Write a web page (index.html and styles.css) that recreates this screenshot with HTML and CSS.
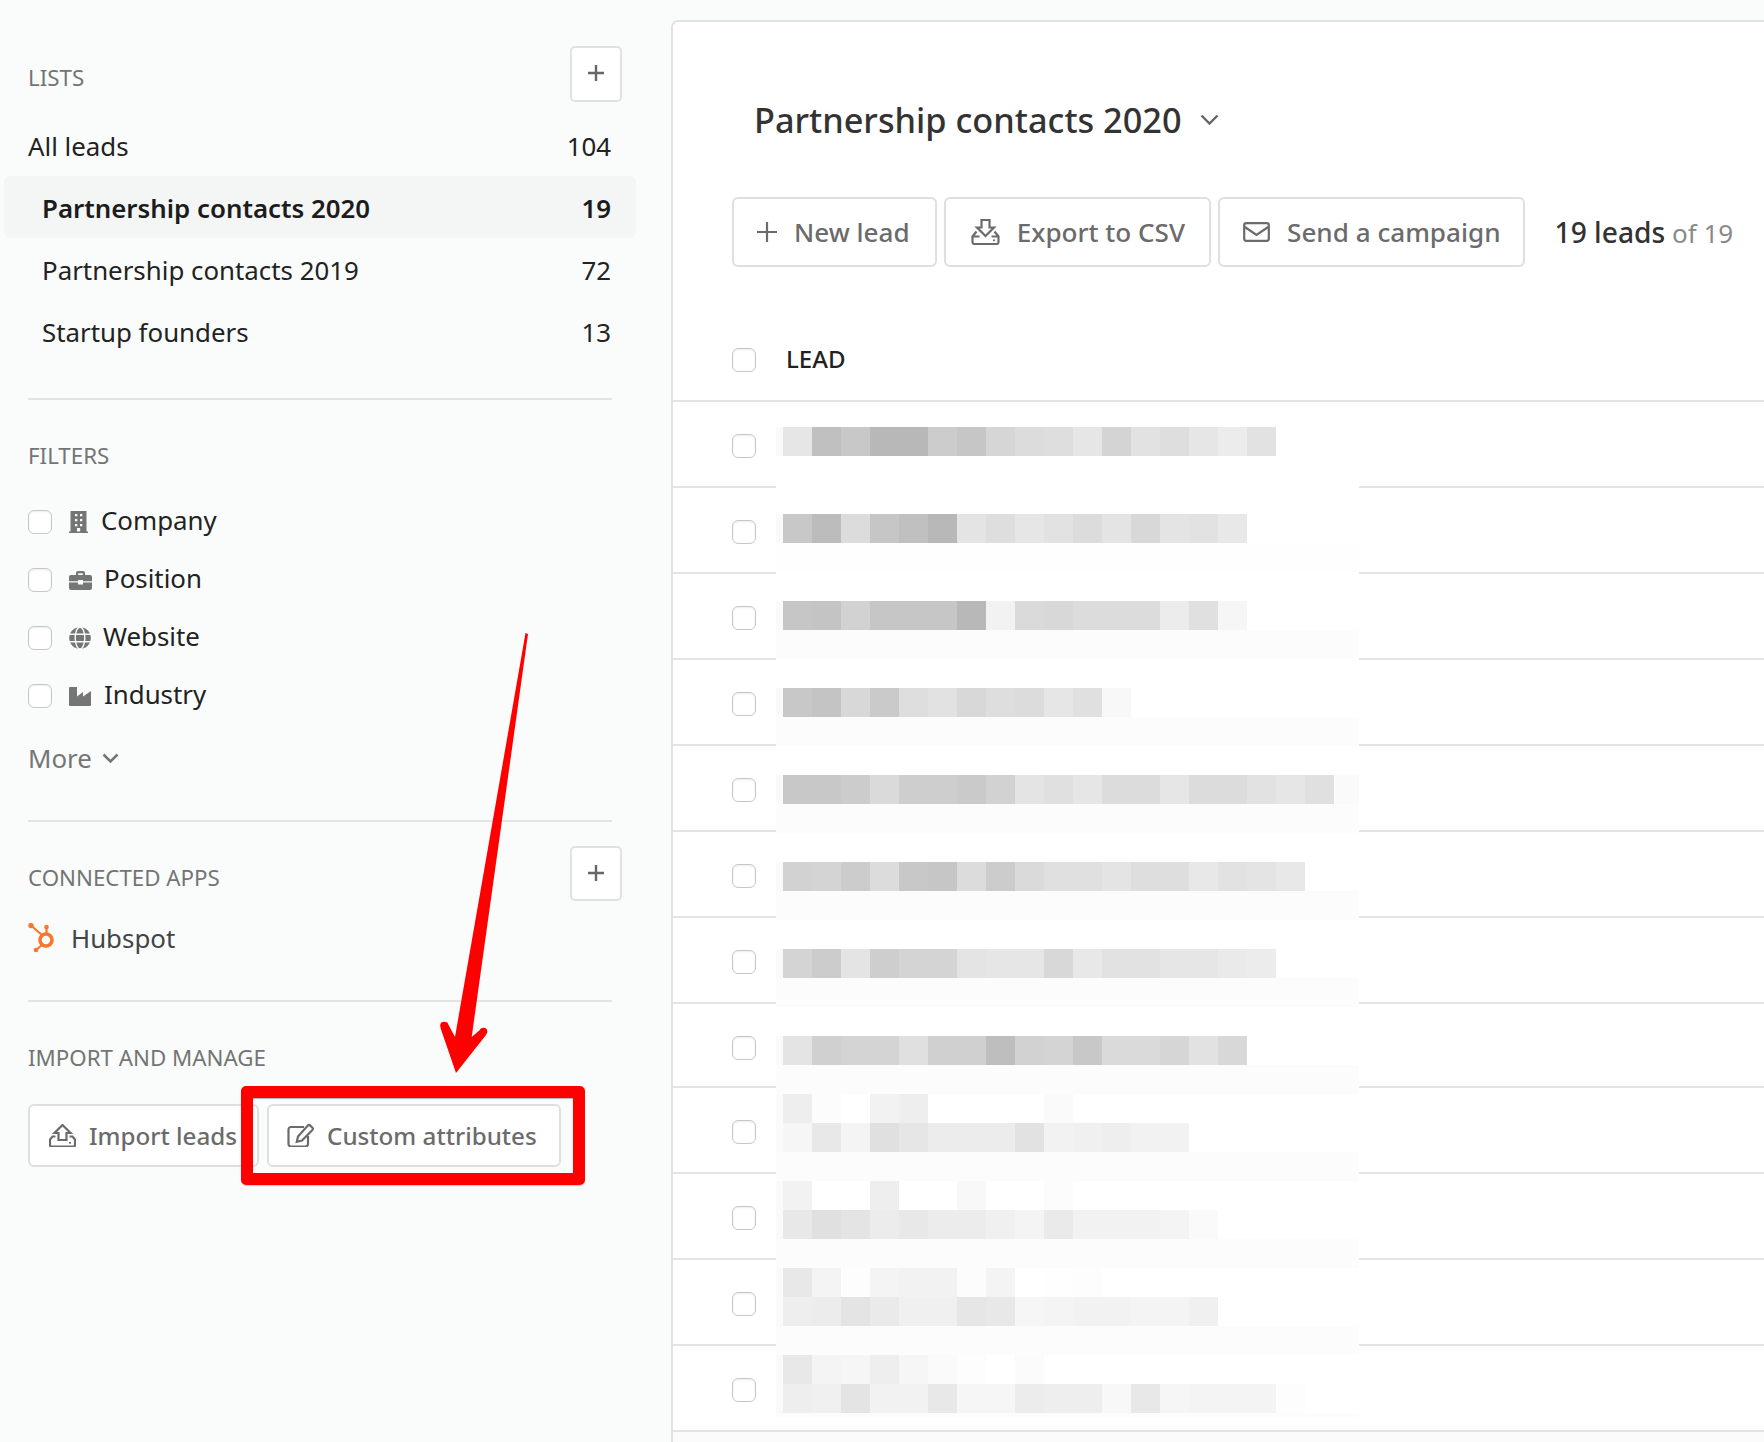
FILE: index.html
```html
<!DOCTYPE html>
<html lang="en">
<head>
<meta charset="utf-8">
<title>Leads</title>
<link rel="stylesheet" href="styles.css">
</head>
<body>
<aside class="sidebar">
  <section class="sect sect-lists">
    <div class="sect-head">
      <h2 class="label label-offset">LISTS</h2>
      <button class="add-btn"><svg class="ic-add" viewBox="0 0 16 16"><path d="M8 0v16M0 8h16"/></svg></button>
    </div>
    <ul class="lists">
      <li class="list-row list-all"><span>All leads</span><span>104</span></li>
      <li class="list-row list-active"><span>Partnership contacts 2020</span><span>19</span></li>
      <li class="list-row"><span>Partnership contacts 2019</span><span>72</span></li>
      <li class="list-row"><span>Startup founders</span><span>13</span></li>
    </ul>
  </section>

  <section class="sect sect-filters">
    <h2 class="label">FILTERS</h2>
    <ul class="filters">
      <li class="filter">
        <input class="check" type="checkbox">
        <svg class="ic-building" viewBox="0 0 19 22"><path fill-rule="evenodd" d="M1.5 0H17.500V20.500H19V22H0V20.500H1.500ZM6 3V5.200H8.300V3ZM11 3V5.200H13.300V3ZM6 8V10.200H8.300V8ZM11 8V10.200H13.300V8ZM6 13V15.200H8.300V13ZM11 13V15.200H13.300V13ZM8 17V20.500H11.200V17Z"/></svg>
        <span class="f-company">Company</span>
      </li>
      <li class="filter">
        <input class="check" type="checkbox">
        <svg class="ic-brief" viewBox="0 0 23 19"><path d="M7 4V2a2 2 0 0 1 2-2h5a2 2 0 0 1 2 2v2h-2.200V2.200H9.200V4z"/><path d="M2 4h19a2 2 0 0 1 2 2v4.200H14V9H9v1.200H0V6a2 2 0 0 1 2-2z"/><path d="M0 11.500h9V13.500h5V11.500h9V17a2 2 0 0 1-2 2H2a2 2 0 0 1-2-2z"/></svg>
        <span class="f-position">Position</span>
      </li>
      <li class="filter">
        <input class="check" type="checkbox">
        <svg class="ic-globe" viewBox="0 0 22 22"><circle class="globe-disc" cx="11" cy="11" r="10.800"/><path class="globe-lines" d="M0 7.300h22M0 14.700h22"/><ellipse class="globe-lines" cx="11" cy="11" rx="4.800" ry="11"/></svg>
        <span class="f-website">Website</span>
      </li>
      <li class="filter">
        <input class="check" type="checkbox">
        <svg class="ic-industry" viewBox="0 0 22 19"><path d="M0 1a1 1 0 0 1 1-1h7v9.500l6-4.500v4.500l8-5.500V18a1 1 0 0 1-1 1H1a1 1 0 0 1-1-1z"/></svg>
        <span class="f-industry">Industry</span>
      </li>
    </ul>
    <div class="more">More <svg class="ic-chev" viewBox="0 0 17 11"><path d="M1.500 1.500 8.500 8.500l7-7"/></svg></div>
  </section>

  <section class="sect sect-apps">
    <div class="sect-head sect-head-apps">
      <h2 class="label label-offset">CONNECTED APPS</h2>
      <button class="add-btn"><svg class="ic-add" viewBox="0 0 16 16"><path d="M8 0v16M0 8h16"/></svg></button>
    </div>
    <div class="app">
      <svg class="ic-hubspot" viewBox="0 0 26 30">
        <circle class="hs-ring" cx="18" cy="17" r="6"/>
        <path class="hs-line" d="M3 2.500 14 12M18.500 4.500V11M14 22 8 27"/>
        <circle class="hs-dot" cx="3" cy="2.600" r="2.700"/>
        <circle class="hs-dot" cx="18.500" cy="4" r="2.300"/>
        <circle class="hs-dot" cx="8" cy="27" r="2.300"/>
      </svg>
      <span>Hubspot</span>
    </div>
  </section>

  <section class="sect sect-import">
    <h2 class="label">IMPORT AND MANAGE</h2>
    <div class="import-btns">
      <button class="btn btn-side btn-import">
        <svg class="ic-import" viewBox="0 0 27 23"><path d="M13.500 1 21.500 9h-4v7h-8V9h-4z"/><path d="M6.500 12.500H3.500L1 15.500v5.500a1.500 1.500 0 0 0 1.500 1.500h22a1.500 1.500 0 0 0 1.500-1.500v-5.500l-2.500-3h-3"/><circle class="ic-dot" cx="21" cy="18.800" r="1.100"/></svg>
        Import leads
      </button>
      <button class="btn btn-side btn-custom">
        <svg class="ic-edit" viewBox="0 0 27 24"><path d="M17 4H4a2.500 2.500 0 0 0-2.500 2.500v14.500A2.500 2.500 0 0 0 4 23.500h14.500a2.500 2.500 0 0 0 2.500-2.500V13"/><path d="M11 13.500 9.800 18.700 15 17.500 25.200 7.300a2 2 0 0 0 0-2.800L23.400 2.700a2 2 0 0 0-2.800 0z"/></svg>
        Custom attributes
      </button>
    </div>
  </section>
</aside>

<main class="main">
  <h1 class="title">Partnership contacts 2020 <svg class="ic-title-chev" viewBox="0 0 19 12"><path d="M1.500 1.500 9.500 9.500l8-8"/></svg></h1>
  <div class="toolbar">
    <button class="btn btn-new"><svg class="ic-plus" viewBox="0 0 20 20"><path d="M10 0v20M0 10h20"/></svg>New lead</button>
    <button class="btn btn-export">
      <svg class="ic-export" viewBox="0 0 29 26"><path d="M10.500 1h8v7.500h4.500L14.500 17 6 8.500h4.500z"/><path d="M5.500 12.500 1.500 17.500v5.500a2 2 0 0 0 2 2h22a2 2 0 0 0 2-2v-5.500l-4-5"/><path d="M1.500 17.500H8.500M20.500 17.500h7"/><circle class="ic-dot" cx="23" cy="21.300" r="1.100"/></svg>
      Export to CSV
    </button>
    <button class="btn btn-send">
      <svg class="ic-mail" viewBox="0 0 27 20"><rect x="1.200" y="1.200" width="24.600" height="17.600" rx="2"/><path d="M1.800 5 13.500 13 25.200 5"/></svg>
      Send a campaign
    </button>
    <div class="count"><strong>19 leads</strong> <span>of 19</span></div>
  </div>
  <div class="thead">
    <input class="check" type="checkbox">
    <span class="th-lead">LEAD</span>
  </div>
  <div class="rows">
    <div class="row"><input class="check" type="checkbox"></div>
    <div class="row"><input class="check" type="checkbox"></div>
    <div class="row"><input class="check" type="checkbox"></div>
    <div class="row"><input class="check" type="checkbox"></div>
    <div class="row"><input class="check" type="checkbox"></div>
    <div class="row"><input class="check" type="checkbox"></div>
    <div class="row"><input class="check" type="checkbox"></div>
    <div class="row row-short"><input class="check" type="checkbox"></div>
    <div class="row"><input class="check" type="checkbox"></div>
    <div class="row"><input class="check" type="checkbox"></div>
    <div class="row"><input class="check" type="checkbox"></div>
    <div class="row"><input class="check" type="checkbox"></div>
  </div>
  <div class="tfoot"></div>
  <svg class="mosaic" id="mosaic" viewBox="0 0 583 990" shape-rendering="crispEdges"></svg>
</main>

<div class="callout-box"></div>
<svg class="callout-arrow" viewBox="0 0 1764 1442">
  <path d="M525.500 633 528 634 471.700 1037 481 1029 486 1035 456 1073 440.500 1028 447 1022 455 1037z"/>
  <circle cx="483.500" cy="1031.500" r="3.800"/>
  <circle cx="444" cy="1025.500" r="3.800"/>
</svg>
<script src="mosaic.js"></script>
</body>
</html>
```

FILE: styles.css
```css
* { box-sizing: border-box; }
html, body { margin: 0; padding: 0; }
body {
  position: relative;
  display: flex;
  width: 1764px;
  height: 1442px;
  overflow: hidden;
  background: #fafcfb;
  font-family: "Noto Sans", "Open Sans", sans-serif;
  font-size: 25.85px;
  color: #222;
}
ul { list-style: none; margin: 0; padding: 0; }
h1, h2 { margin: 0; font-weight: 400; }
button { font-family: inherit; cursor: pointer; }

.sidebar { flex: 0 0 671px; padding-left: 28px; }
.sect { width: 584px; border-bottom: 2px solid #e3e5e5; }
.sect-import { border-bottom: 0; }
.sect-lists { padding: 46px 0 36px; }
.sect-filters { padding: 42px 0 42px; }
.sect-apps { padding: 24px 0 42px; }
.sect-import { padding-top: 42px; }

.sect-head { position: relative; display: flex; justify-content: space-between; align-items: flex-start; width: 594px; height: 56px; }
.sect-head-apps { height: 55px; }
.label { font-size: 22.3px; line-height: 28px; color: #737574; }
.label-offset { padding-top: 18px; }

.add-btn { display: flex; align-items: center; justify-content: center; width: 52px; height: 100%; padding: 0; background: #fff; border: 2px solid #e0e2e2; border-radius: 5px; }
.ic-add { width: 16px; height: 16px; margin-top: -2px; fill: none; stroke: #666; stroke-width: 2.4; }

.lists { margin: 12px 0 0 -24px; width: 632px; }
.list-row { display: flex; justify-content: space-between; align-items: center; height: 62px; padding: 2px 25px 0 38px; border-radius: 6px; line-height: 60px; }
.list-all { padding-left: 24px; }
.list-active { background: #f4f5f5; font-weight: 600; color: #1c1c1c; }

.check { appearance: none; -webkit-appearance: none; flex: none; display: block; width: 24px; height: 24px; margin: 0; background: #fff; border: 1.5px solid #c6c8c8; border-radius: 6px; box-shadow: inset 0 1px 2px rgba(0, 0, 0, .08); }

.filters { margin-top: 23px; }
.filter { display: flex; align-items: center; height: 58px; }
.filter svg { flex: none; margin-left: 17px; fill: #757575; }
.filter span { margin-top: -4px; }
.ic-building { width: 19px; height: 22px; }
.ic-brief { width: 23px; height: 19px; }
.ic-globe { width: 22px; height: 22px; }
.ic-industry { width: 22px; height: 19px; }
.f-company { margin-left: 13px; }
.f-position { margin-left: 12px; }
.f-website { margin-left: 12px; }
.f-industry { margin-left: 13px; }
.filter svg .globe-lines { fill: none; stroke: #fafcfb; stroke-width: 1.4; }

.more { display: flex; align-items: center; gap: 10px; height: 40px; margin-top: 13px; color: #757575; }
.ic-chev { width: 17px; height: 11px; fill: none; stroke: #757575; stroke-width: 2.5; }

.app { display: flex; align-items: center; gap: 17px; height: 40px; margin-top: 17px; color: #444; }
.ic-hubspot { flex: none; width: 26px; height: 30px; }
.hs-ring { fill: none; stroke: #f8762f; stroke-width: 3.6; }
.hs-line { fill: none; stroke: #f8762f; stroke-width: 2.2; }
.hs-dot { fill: #f8762f; }

.import-btns { display: flex; gap: 8px; margin-top: 32px; }
.btn { display: flex; align-items: center; flex: none; background: #fff; border: 2px solid #dedfdf; border-radius: 6px; color: #6b6b6b; font-size: 26.1px; font-weight: 500; white-space: nowrap; }
.btn svg { flex: none; fill: none; stroke: #6b6b6b; stroke-width: 2.2; }
.btn svg .ic-dot { fill: #6b6b6b; stroke: none; }
.btn-side { height: 63px; padding-bottom: 2px; gap: 13px; font-size: 24.2px; }
.btn-import { padding-left: 19px; padding-right: 20px; }
.btn-custom { padding-left: 18px; padding-right: 22px; }
.ic-import { width: 27px; height: 23px; }
.ic-edit { width: 27px; height: 24px; }

.main { position: relative; flex: 1; margin-top: 20px; padding-left: 59px; background: #fff; border-top: 2px solid #e2e2e2; border-left: 2px solid #e2e2e2; border-top-left-radius: 7px; }
.title { display: flex; align-items: center; gap: 18px; height: 40px; margin: 78px 0 0 22px; font-size: 34.3px; font-weight: 500; line-height: 40px; color: #333; }
.ic-title-chev { width: 19px; height: 12px; fill: none; stroke: #666; stroke-width: 2.4; }

.toolbar { display: flex; align-items: center; gap: 7px; margin-top: 57px; height: 70px; }
.toolbar .btn { height: 70px; }
.btn-new { padding: 0 25px 0 23px; gap: 17px; }
.ic-plus { width: 20px; height: 20px; }
.btn-export { padding: 0 24px 0 25px; gap: 17px; }
.ic-export { width: 29px; height: 26px; }
.btn-send { padding: 0 22px 0 23px; gap: 17px; }
.ic-mail { width: 27px; height: 20px; }
.count { margin-left: 23px; font-size: 26px; color: #8a8a8a; white-space: nowrap; }
.count strong { font-size: 28.2px; font-weight: 500; color: #333; }

.thead { display: flex; align-items: center; height: 135px; margin-left: -59px; padding: 53px 0 0 59px; border-bottom: 2px solid #e4e4e4; }
.th-lead { margin: -4px 0 0 30px; font-size: 24px; font-weight: 500; color: #222; }

.rows { margin-left: -59px; }
.row { height: 86px; padding: 32px 0 0 59px; border-bottom: 2px solid #e4e4e4; }
.row-short { height: 84px; }
.tfoot { height: 10px; margin-left: -59px; background: #fbfbfb; }

.mosaic { position: absolute; left: 103px; top: 405px; width: 583px; height: 990px; background: #fff; }
.mosaic rect { width: 29px; height: 29px; }
.mosaic .band { width: 583px; }
.mosaic .strip { width: 7px; }

.callout-box { position: absolute; left: 241px; top: 1086px; width: 344px; height: 99px; border: 12px solid #f00; border-radius: 5px; box-shadow: inset 0 1px 1px rgba(0, 0, 0, .3), 0 1px 1px rgba(0, 0, 0, .2); }
.callout-arrow { position: absolute; left: 0; top: 0; width: 1764px; height: 1442px; fill: #f00; pointer-events: none; }
```

FILE: mosaic.js
```js
// Pixelated (redacted) lead names: each entry is [top of the row in px, grey levels per 29px cell].
var ROWS = [
  [0, "e6 c0 c8 b8 b8 cc c6 d6 dc de e6 d4 e2 de e6 ec e2"],
  [87, "c8 bc dc c6 c0 b8 e4 de e6 e2 dc e4 d8 e4 e2 e8"],
  [174, "c6 c4 d2 c6 c6 c6 b8 f2 da d8 dc dc dc ec e0 f6"],
  [261, "c8 c4 d8 ca de e2 d8 de dc e6 e0 f8"],
  [348, "c8 c8 cc da ce ce ca d2 e4 e0 e6 dc dc e6 dc dc e2 e6 e0 fa"],
  [435, "d2 d4 cc dc c8 c6 dc cc da e0 e0 e4 de de e8 e2 e4 e8"],
  [522, "d4 cc e4 ce d4 d4 e4 e6 e6 d8 e8 e2 e2 e6 e6 ea ec"],
  [609, "e4 d0 d4 d4 e0 d0 d0 be d2 d4 c8 da da d6 e2 d8"],
  [667, "ee fc ff f2 ee ff ff ff ff fa"],
  [696, "f6 e8 f4 e0 e6 ec ec ec e2 f2 f0 ee f2 f2"],
  [754, "f2 ff ff ee ff ff f8 ff ff fc"],
  [783, "e8 e0 e4 ec e8 ec ec f0 f4 ea f2 f2 f2 f4 fa"],
  [841, "e8 f4 fd f4 f2 f2 fc f4 ff fe fd"],
  [870, "ee ec e4 ea f0 f0 e6 e8 f6 f4 f2 f2 f4 f4 f0"],
  [928, "e8 f4 f6 ee f6 fa fd ff fb"],
  [957, "ee f0 e4 f2 f2 e8 f6 f6 ec ee ee f8 e8 f6 f4 f4 f4 fd"]
];
var BANDS = [[116, "fe"], [203, "fc"], [290, "fc"], [377, "fc"], [464, "fc"], [551, "fc"], [638, "fc"], [725, "fc"], [812, "fc"], [899, "fc"], [986, "fc"]];
var svg = document.getElementById("mosaic");
function addRect(x, y, grey, cls) {
  var r = document.createElementNS("http://www.w3.org/2000/svg", "rect");
  r.setAttribute("x", x);
  r.setAttribute("y", y);
  r.setAttribute("fill", "#" + grey + grey + grey);
  if (cls) r.setAttribute("class", cls);
  svg.appendChild(r);
}
BANDS.forEach(function (b) { addRect(0, b[0], b[1], "band"); });
ROWS.forEach(function (row) {
  addRect(0, row[0], "fa", "strip");
  row[1].split(" ").forEach(function (g, i) { addRect(7 + i * 29, row[0], g); });
});
```
